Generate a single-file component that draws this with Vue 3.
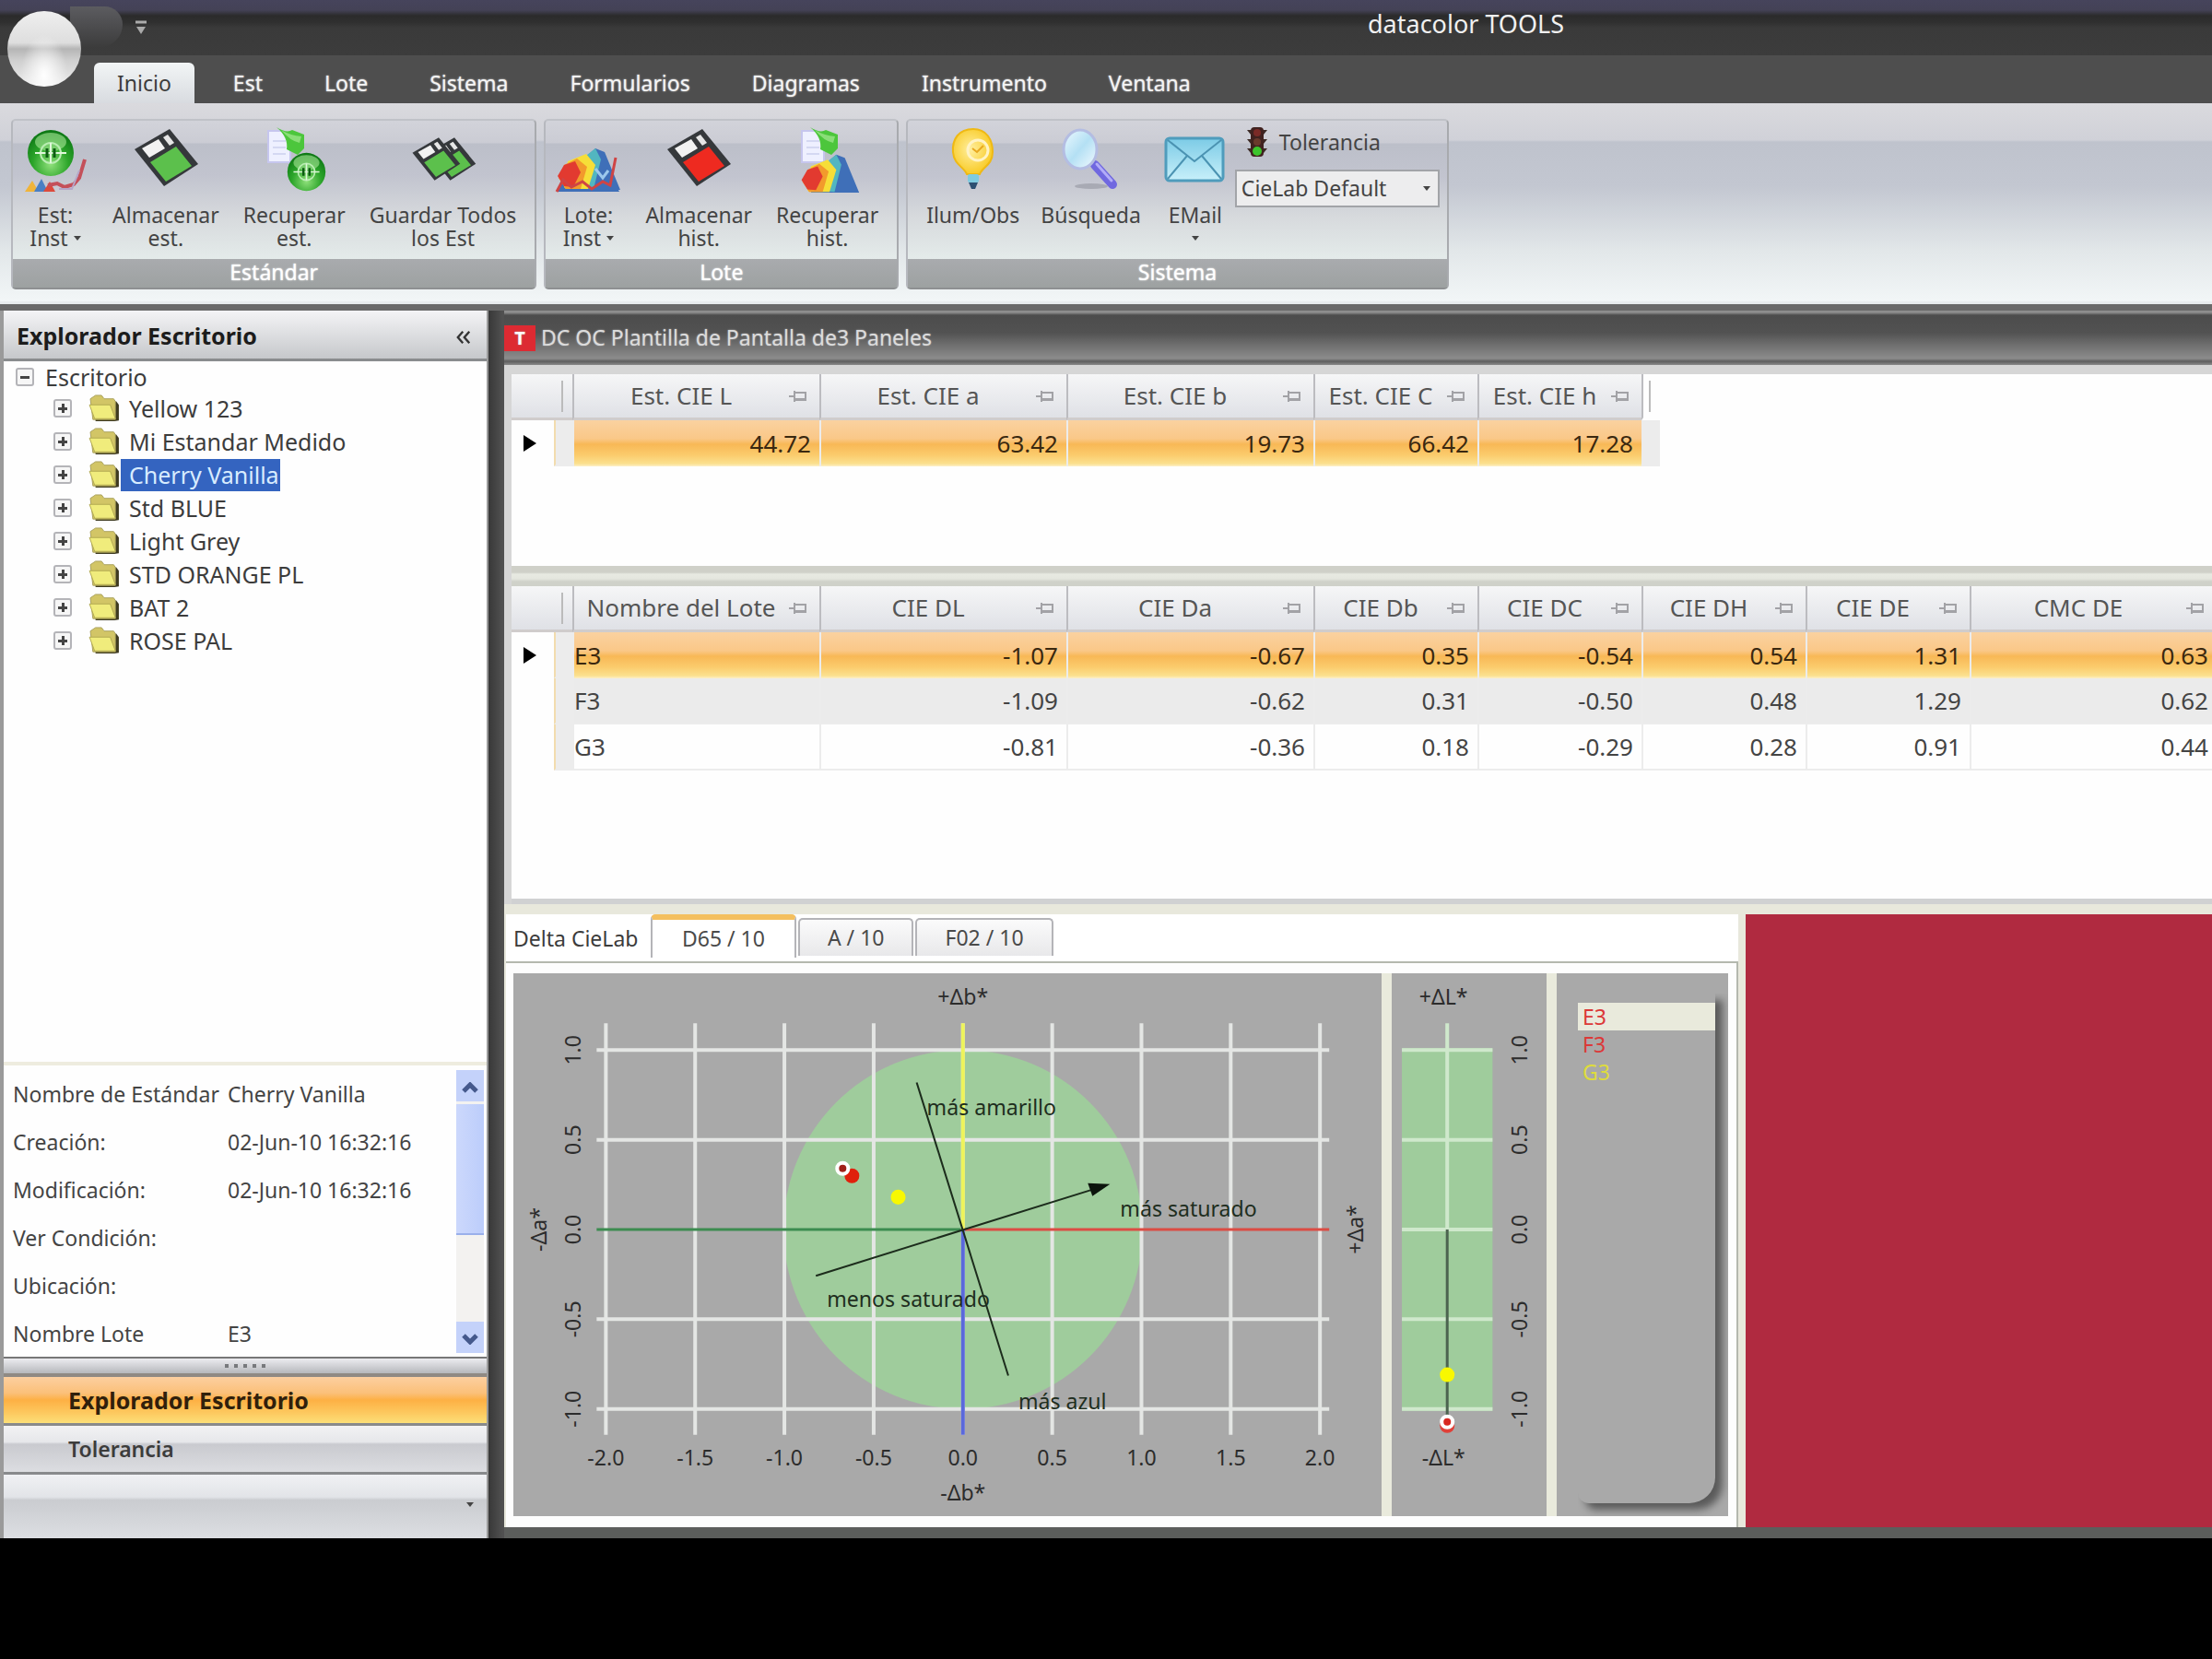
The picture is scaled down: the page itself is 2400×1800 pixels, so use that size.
<script setup>
import { ref } from 'vue'

const menu = ['Inicio', 'Est', 'Lote', 'Sistema', 'Formularios', 'Diagramas', 'Instrumento', 'Ventana']
const activeMenu = ref('Inicio')

const ribbon = [
  {
    name: 'Estándar',
    items: [
      { lines: ['Est:', 'Inst'], icon: 'measure-std', drop: true },
      { lines: ['Almacenar', 'est.'], icon: 'disk-green' },
      { lines: ['Recuperar', 'est.'], icon: 'recall-std' },
      { lines: ['Guardar Todos', 'los Est'], icon: 'disks' }
    ]
  },
  {
    name: 'Lote',
    items: [
      { lines: ['Lote:', 'Inst'], icon: 'measure-lot', drop: true },
      { lines: ['Almacenar', 'hist.'], icon: 'disk-red' },
      { lines: ['Recuperar', 'hist.'], icon: 'recall-lot' }
    ]
  },
  {
    name: 'Sistema',
    tolerance: true,
    items: [
      { lines: ['Ilum/Obs'], icon: 'bulb' },
      { lines: ['Búsqueda'], icon: 'search' },
      { lines: ['EMail', ''], icon: 'mail', drop: true }
    ]
  }
]

const folders = ['Yellow 123', 'Mi Estandar Medido', 'Cherry Vanilla', 'Std BLUE', 'Light Grey', 'STD ORANGE PL', 'BAT 2', 'ROSE PAL']
const selected = ref('Cherry Vanilla')

const details = [
  ['Nombre de Estándar', 'Cherry Vanilla'],
  ['Creación:', '02-Jun-10 16:32:16'],
  ['Modificación:', '02-Jun-10 16:32:16'],
  ['Ver Condición:', ''],
  ['Ubicación:', ''],
  ['Nombre Lote', 'E3']
]

const stdColumns = ['Est. CIE L', 'Est. CIE a', 'Est. CIE b', 'Est. CIE C', 'Est. CIE h']
const stdRow = ['44.72', '63.42', '19.73', '66.42', '17.28']

const lotColumns = ['Nombre del Lote', 'CIE DL', 'CIE Da', 'CIE Db', 'CIE DC', 'CIE DH', 'CIE DE', 'CMC DE']
const lotRows = [
  ['E3', '-1.07', '-0.67', '0.35', '-0.54', '0.54', '1.31', '0.63'],
  ['F3', '-1.09', '-0.62', '0.31', '-0.50', '0.48', '1.29', '0.62'],
  ['G3', '-0.81', '-0.36', '0.18', '-0.29', '0.28', '0.91', '0.44']
]

const illuminants = ['D65 / 10', 'A / 10', 'F02 / 10']
const illuminant = ref('D65 / 10')

const xTicks = [-2, -1.5, -1, -0.5, 0, 0.5, 1, 1.5, 2]
const yTicks = [1, 0.5, 0, -0.5, -1]
const px = v => 486 + v * 193
const py = v => 277 - v * 194
</script>

<template>
  <div class="app">
    <svg class="defs" aria-hidden="true">
      <defs>
        <radialGradient id="sphere" cx=".5" cy=".75" r=".7">
          <stop offset="0" stop-color="#8ee07a" />
          <stop offset=".55" stop-color="#2ca52a" />
          <stop offset="1" stop-color="#0f7a16" />
        </radialGradient>
        <radialGradient id="glow" cx=".45" cy=".45" r=".6">
          <stop offset="0" stop-color="#ffefa0" />
          <stop offset="1" stop-color="#f8c81c" />
        </radialGradient>
        <linearGradient id="envelope" x1="0" y1="0" x2="0" y2="1">
          <stop offset="0" stop-color="#7ccbe6" />
          <stop offset="1" stop-color="#c8f0fa" />
        </linearGradient>
        <linearGradient id="lens" x1="0" y1="0" x2="1" y2="1">
          <stop offset="0" stop-color="#eefaff" />
          <stop offset=".5" stop-color="#b4e0f4" />
          <stop offset="1" stop-color="#f4fbff" />
        </linearGradient>
        <symbol id="disk-frame" viewBox="0 0 72 72">
          <path d="M2 25 40 3 71 41 34 65Z" fill="#35383b" />
          <path d="M10 24 28 14 35 24 18 34Z" fill="#f2f2f2" />
          <path d="M33 12 38 9 45 18 40 21Z" fill="#e6e6e6" />
        </symbol>
        <symbol id="globe" viewBox="0 0 52 52">
          <circle cx="26" cy="26" r="25" fill="url(#sphere)" />
          <ellipse cx="26" cy="14" rx="17" ry="10" fill="#b6f0a4" opacity=".55" />
          <circle cx="26" cy="26" r="11" fill="none" stroke="#b9edb2" stroke-width="2" />
          <path d="M9 26H43M26 15V37" stroke="#dff7da" stroke-width="2" />
          <path d="M22 21V31M30 21V31" stroke="#0c5c12" stroke-width="3" />
        </symbol>
        <symbol id="measure-std" viewBox="0 0 72 72">
          <path d="M3 71 11 59 18 71Z" fill="#f0b43a" />
          <path d="M13 71 21 57 28 71Z" fill="#4a7fc4" />
          <path d="M23 71 30 60 36 71Z" fill="#dc4a3c" />
          <path d="M28 64 38 62 46 66 56 63 62 56 68 36" fill="none" stroke="#c4505a" stroke-width="4" />
          <path d="M40 68 54 68 62 48" fill="none" stroke="#b5a6c8" stroke-width="2" />
          <use href="#globe" x="5" y="3" width="52" height="52" />
        </symbol>
        <symbol id="disk-green" viewBox="0 0 72 72">
          <use href="#disk-frame" />
          <path d="M19 39 47 22 64 43 36 60Z" fill="#5cc04c" />
        </symbol>
        <symbol id="disk-red" viewBox="0 0 72 72">
          <use href="#disk-frame" />
          <path d="M19 39 47 22 64 43 36 60Z" fill="#ee2a20" />
        </symbol>
        <symbol id="disks" viewBox="0 0 72 72">
          <use href="#disk-green" x="18" y="10" width="54" height="54" />
          <use href="#disk-green" x="1" y="10" width="54" height="54" />
        </symbol>
        <symbol id="sheet" viewBox="0 0 72 72">
          <path d="M8 5H24L32 12V39H8Z" fill="#eef0ff" stroke="#c6c6ee" stroke-width="2" />
          <path d="M13 16H27M13 23H27M13 30H27" stroke="#d4d8f2" stroke-width="2" />
          <path d="M17 1Q28 8 34 4L47 9V24L40 31 28 25Q30 12 17 1Z" fill="#4cc63c" />
          <path d="M22 4Q32 10 44 11L42 18Q32 16 22 4Z" fill="#8ade78" />
        </symbol>
        <symbol id="recall-std" viewBox="0 0 72 72">
          <use href="#sheet" />
          <use href="#globe" x="28" y="28" width="43" height="43" />
        </symbol>
        <symbol id="peaks" viewBox="0 0 72 50">
          <path d="M14 49 28 18 44 4 54 8 71 49Z" fill="#3f6fb8" />
          <path d="M14 46 26 18 44 4 50 16 42 48Z" fill="#52b6c0" />
          <path d="M10 46 14 18 34 10 44 22 36 48H12Z" fill="#f6de38" />
          <path d="M4 36 10 22 24 15 35 24 28 48H12Z" fill="#f29a2c" />
          <path d="M3 34 10 22 22 18 28 30 20 46 10 45Z" fill="#e23a30" />
        </symbol>
        <symbol id="measure-lot" viewBox="0 0 72 72">
          <path d="M2 71 8 56H62L70 71Z" fill="#3f6fb8" />
          <use href="#peaks" x="0" y="20" width="72" height="50" />
          <path d="M2 71 9 58 18 66 30 60 40 68 52 60 60 64 66 34" fill="none" stroke="#cf4444" stroke-width="3" />
          <path d="M44 46 52 56 58 48" fill="none" stroke="#9cc8ec" stroke-width="3" />
        </symbol>
        <symbol id="recall-lot" viewBox="0 0 72 72">
          <use href="#sheet" />
          <use href="#peaks" x="4" y="27" width="68" height="46" />
        </symbol>
        <symbol id="bulb" viewBox="0 0 72 72">
          <path d="M36 3C20 3 13 14 14 28 15 42 26 44 29 52H43C46 44 57 42 57 28 57 14 50 3 36 3Z" fill="url(#glow)" stroke="#efb914" stroke-width="2" />
          <circle cx="41" cy="26" r="11" fill="none" stroke="#fff3c4" stroke-width="3" />
          <path d="M35 24 40 28 47 21" fill="none" stroke="#e8a820" stroke-width="2" />
          <rect x="30" y="52" width="12" height="9" rx="2" fill="#7fcbe0" />
          <path d="M31 61H41L38 68H34Z" fill="#2c4f72" />
        </symbol>
        <symbol id="search" viewBox="0 0 72 72">
          <ellipse cx="36" cy="65" rx="18" ry="3" fill="#a8aab4" />
          <path d="M40 42 59 63" stroke="#7068e0" stroke-width="10" stroke-linecap="round" />
          <path d="M42 41 58 59" stroke="#b2acf8" stroke-width="3" stroke-linecap="round" />
          <ellipse cx="24" cy="25" rx="18" ry="21" fill="url(#lens)" stroke="#b4bde2" stroke-width="3" />
        </symbol>
        <symbol id="mail" viewBox="0 0 72 72">
          <rect x="4" y="13" width="62" height="46" rx="4" fill="url(#envelope)" stroke="#4f9cbc" stroke-width="3" />
          <path d="M6 15 35 38 64 15M6 57 27 32M64 57 43 32" fill="none" stroke="#4b93b2" stroke-width="2" />
        </symbol>
        <symbol id="folder" viewBox="0 0 36 32">
          <path d="M8 8H32L35 12V30L30 31H8Z" fill="#3e3a20" />
          <path d="M2 5 8 1H15L18 5H29L31 8V29H5Z" fill="#d2c566" stroke="#a89f5a" />
          <path d="M1 12H25L31 28H7Z" fill="#f0ec7c" stroke="#b0a850" />
        </symbol>
        <symbol id="pin" viewBox="0 0 22 16">
          <path d="M1 8H6M7 2V14M7 4H19V11H7M8 12H20" fill="none" stroke="#a2a2a6" stroke-width="2" />
        </symbol>
      </defs>
    </svg>

    <header class="titlebar">
      <span class="quick-shape"></span>
      <button class="orb" aria-label="Menú principal"></button>
      <button class="quick" aria-label="Personalizar">
        <svg width="12" height="16" viewBox="0 0 12 16"><path d="M0 2H12" stroke="#aaa" stroke-width="3" /><path d="M1 7H11L6 15Z" fill="#aaa" /></svg>
      </button>
      <h1>datacolor TOOLS</h1>
    </header>

    <nav class="menu">
      <button v-for="m in menu" :key="m" :class="{ on: m === activeMenu }" @click="activeMenu = m">{{ m }}</button>
    </nav>

    <section class="ribbon">
      <div v-for="g in ribbon" :key="g.name" class="group">
        <div class="tools">
          <button v-for="t in g.items" :key="t.icon" class="tool">
            <svg class="tool-icon"><use :href="'#' + t.icon" /></svg>
            <span v-for="(l, i) in t.lines" :key="i" class="line">{{ l }}<i v-if="t.drop && i === 1" class="caret"></i></span>
          </button>
          <div v-if="g.tolerance" class="tolerance">
            <label for="tol">
              <svg width="24" height="34" viewBox="0 0 24 34">
                <path d="M1 4H23L19 9H5ZM1 14H23L19 19H5ZM1 24H23L19 29H5Z" fill="#3c2a26" />
                <rect x="5" y="1" width="14" height="32" rx="4" fill="#40221f" />
                <circle cx="12" cy="7" r="4" fill="#7a2a26" /><circle cx="12" cy="17" r="4" fill="#6a3a2c" /><circle cx="12" cy="27" r="5" fill="#3cc42c" />
              </svg>
              Tolerancia
            </label>
            <div class="select"><select id="tol"><option>CieLab Default</option></select><i class="caret"></i></div>
          </div>
        </div>
        <div class="caption">{{ g.name }}</div>
      </div>
    </section>

    <main class="workspace">
      <aside class="explorer">
        <header class="explorer-head">
          <h2>Explorador Escritorio</h2>
          <button aria-label="Contraer">
            <svg width="18" height="14" viewBox="0 0 20 18"><path d="M9 1 2 9 9 17M18 1 11 9 18 17" fill="none" stroke="#333" stroke-width="3" /></svg>
          </button>
        </header>
        <div class="tree">
          <div class="root"><button class="expander" aria-label="Contraer Escritorio"></button>Escritorio</div>
          <ul>
            <li v-for="f in folders" :key="f" :class="{ selected: f === selected }">
              <button class="expander plus" :aria-label="'Expandir ' + f"></button>
              <svg class="folder"><use href="#folder" /></svg>
              <button class="name" @click="selected = f">{{ f }}</button>
            </li>
          </ul>
        </div>
        <div class="details">
          <dl>
            <template v-for="[k, v] in details" :key="k"><dt>{{ k }}</dt><dd>{{ v }}</dd></template>
          </dl>
          <div class="scrollbar">
            <button aria-label="Subir"><svg width="18" height="12" viewBox="0 0 18 12"><path d="M2 10 9 3 16 10" fill="none" stroke="#45598c" stroke-width="5" /></svg></button>
            <div class="thumb"></div>
            <button aria-label="Bajar"><svg width="18" height="12" viewBox="0 0 18 12"><path d="M2 2 9 9 16 2" fill="none" stroke="#45598c" stroke-width="5" /></svg></button>
          </div>
        </div>
        <div class="splitter"><i v-for="n in 5" :key="n"></i></div>
        <button class="nav active">Explorador Escritorio</button>
        <button class="nav">Tolerancia</button>
        <div class="nav-foot"><i class="caret"></i></div>
      </aside>

      <div class="document">
        <header class="doc-title"><b>T</b><span>DC OC Plantilla de Pantalla de3 Paneles</span></header>

        <div class="pane std">
          <table>
            <colgroup><col class="c-mark" /><col class="c-grip" /><col class="c-l" /><col class="c-l" /><col class="c-l" /><col class="c-s" /><col class="c-s" /><col class="c-end" /></colgroup>
            <thead>
              <tr><th></th><th class="grip"></th><th v-for="c in stdColumns" :key="c"><div class="th"><span>{{ c }}</span><svg class="pin"><use href="#pin" /></svg></div></th><th class="end"></th></tr>
            </thead>
            <tbody>
              <tr class="sel"><td class="mark"><i class="arrow"></i></td><td class="grip"></td><td v-for="c in stdRow" :key="c">{{ c }}</td><td class="end"></td></tr>
            </tbody>
          </table>
        </div>

        <div class="pane lots">
          <table>
            <colgroup><col class="c-mark" /><col class="c-grip" /><col class="c-l" /><col class="c-l" /><col class="c-l" /><col class="c-s" /><col class="c-s" /><col class="c-s" /><col class="c-s" /><col class="c-l" /></colgroup>
            <thead>
              <tr><th></th><th class="grip"></th><th v-for="c in lotColumns" :key="c"><div class="th"><span>{{ c }}</span><svg class="pin"><use href="#pin" /></svg></div></th></tr>
            </thead>
            <tbody>
              <tr v-for="(r, i) in lotRows" :key="r[0]" :class="{ sel: i === 0, alt: i === 1 }">
                <td class="mark"><i v-if="i === 0" class="arrow"></i></td><td class="grip"></td>
                <td v-for="(c, j) in r" :key="j" :class="{ text: j === 0 }">{{ c }}</td>
              </tr>
            </tbody>
          </table>
        </div>

        <div class="bottom">
          <section class="plots">
            <div class="tabs">
              <span>Delta CieLab</span>
              <button v-for="t in illuminants" :key="t" :class="{ on: t === illuminant }" @click="illuminant = t">{{ t }}</button>
            </div>
            <div class="frame">
              <svg class="plot" viewBox="0 0 939 587">
                <circle :cx="px(0)" :cy="py(0)" r="194" fill="#9fcc9c" />
                <g stroke="#e4e6e4" stroke-width="4">
                  <line v-for="x in xTicks" :key="x" :x1="px(x)" :x2="px(x)" y1="54" y2="499" />
                  <line v-for="y in yTicks.filter(v => v)" :key="y" x1="90" x2="882" :y1="py(y)" :y2="py(y)" />
                </g>
                <g stroke-width="4">
                  <line x1="90" x2="486" y1="277" y2="277" stroke="#3c8c50" stroke-width="3" />
                  <line x1="486" x2="882" y1="277" y2="277" stroke="#dc4c44" stroke-width="3" />
                  <line x1="486" x2="486" y1="54" y2="277" stroke="#eef45a" />
                  <line x1="486" x2="486" y1="277" y2="499" stroke="#5a68dc" />
                </g>
                <g stroke="#1c2c1c" stroke-width="2">
                  <line x1="436" y1="118" x2="535" y2="435" />
                  <line x1="327" y1="327" x2="635" y2="231" />
                </g>
                <path d="M645 228 621 227 626 241Z" fill="#0c140c" />
                <circle cx="366" cy="219" r="8" fill="#e0200c" />
                <circle cx="356" cy="211" r="6" fill="#a02018" stroke="#fff" stroke-width="4" />
                <circle cx="416" cy="242" r="8" fill="#f8f800" />
                <g class="words">
                  <text x="447" y="153">más amarillo</text>
                  <text x="656" y="263">más saturado</text>
                  <text x="339" y="361">menos saturado</text>
                  <text x="546" y="471">más azul</text>
                </g>
                <g class="ticks">
                  <text v-for="x in xTicks" :key="x" :x="px(x)" y="532">{{ x.toFixed(1) }}</text>
                  <text v-for="y in yTicks" :key="y" :transform="`translate(73 ${py(y)}) rotate(-90)`">{{ y.toFixed(1) }}</text>
                  <text x="486" y="34">+Δb*</text>
                  <text x="486" y="570">-Δb*</text>
                  <text transform="translate(36 277) rotate(-90)">-Δa*</text>
                  <text transform="translate(919 277) rotate(-90)">+Δa*</text>
                </g>
              </svg>
              <svg class="plot" viewBox="0 0 167 587">
                <rect x="11" y="81" width="98" height="392" fill="#9fcc9c" />
                <g stroke="#cfe8cc" stroke-width="4">
                  <line v-for="y in yTicks" :key="y" x1="11" x2="109" :y1="py(y)" :y2="py(y)" />
                  <line x1="60" x2="60" y1="54" y2="277" />
                </g>
                <line x1="60" x2="60" y1="277" y2="485" stroke="#4c6450" stroke-width="3" />
                <circle cx="60" cy="434" r="8" fill="#f8f800" />
                <circle cx="60" cy="489" r="8" fill="#e04038" />
                <circle cx="60" cy="485" r="6" fill="#d82820" stroke="#fff" stroke-width="4" />
                <g class="ticks">
                  <text v-for="y in yTicks" :key="y" :transform="`translate(146 ${py(y)}) rotate(-90)`">{{ y.toFixed(1) }}</text>
                  <text x="56" y="34">+ΔL*</text>
                  <text x="56" y="532">-ΔL*</text>
                </g>
              </svg>
              <div class="legend">
                <ul class="card">
                  <li class="on">E3</li>
                  <li>F3</li>
                  <li class="yellow">G3</li>
                </ul>
              </div>
            </div>
          </section>
          <div class="swatch"></div>
        </div>
      </div>
    </main>
  </div>
</template>

<style>
body {
  margin: 0;
  background: #000;
}
</style>

<style scoped>
* {
  box-sizing: border-box;
}

.app {
  font-family: "Noto Sans", "Liberation Sans", sans-serif;
  font-size: 23px;
  line-height: 25px;
  color: #444;
  min-height: 100vh;
  background: #000;
  overflow: hidden;
}

.defs {
  position: absolute;
  width: 0;
  height: 0;
}

button,
select {
  font: inherit;
  color: inherit;
  background: none;
  border: 0;
  padding: 0;
  margin: 0;
}

h1,
h2,
ul,
dl,
dd {
  margin: 0;
  padding: 0;
  font-weight: normal;
  list-style: none;
}

.caret {
  display: inline-block;
  border: 4px solid transparent;
  border-top: 5px solid #444;
  border-bottom: 0;
}

/* Title bar */
.titlebar {
  position: relative;
  height: 60px;
  padding-left: 147px;
  display: flex;
  background: linear-gradient(#46445c 0, #444256 11px, #2b2b2b 17px, #2f2f2f 24px, #3a3a3a 30px, #3c3c3c 60px);
}

.orb {
  position: absolute;
  left: 8px;
  top: 12px;
  width: 80px;
  height: 82px;
  border-radius: 50%;
  background:
    radial-gradient(ellipse at 50% 85%, #fff 0, rgba(255, 255, 255, 0) 45%),
    linear-gradient(#efefef 0, #dedede 42%, #b5b5b5 50%, #cfcfcf 65%, #eee 100%);
  z-index: 2;
}

.quick-shape {
  position: absolute;
  left: 76px;
  top: 7px;
  width: 57px;
  height: 44px;
  border-radius: 0 24px 30px 0;
  background: linear-gradient(#5c5c60, #3c3c3c);
}

.quick {
  align-self: flex-start;
  margin-top: 17px;
}

h1 {
  flex: 1;
  padding-left: 622px;
  text-align: center;
  font-size: 27px;
  line-height: 52px;
  color: #f0f0f0;
}

/* Menu tabs */
.menu {
  display: flex;
  gap: 17px;
  padding: 8px 0 0 102px;
  height: 52px;
  background: #4e4e4e;
}

.menu button {
  padding: 0 25px;
  line-height: 44px;
  color: #f4f4f4;
  text-shadow: 0 0 2px #ddd;
}

.menu button.on {
  color: #3c3c3c;
  text-shadow: none;
  background: linear-gradient(#f2f5f6, #d8dbe0);
  border-radius: 6px 6px 0 0;
}

/* Ribbon */
.ribbon {
  display: flex;
  gap: 8px;
  padding: 17px 12px 13px;
  background: linear-gradient(#dadade 0, #d0d1d8 40px, #bfc3cd 42px, #c3c7d1 90px, #e2e7e9 160px, #f2f6f7 100%);
  border-bottom: 3px solid #e8ecee;
}

.group {
  border: 2px solid #b2b4ba;
  border-color: #c0c2c8 #a8aaae #8e9092 #b6b8be;
  border-radius: 5px;
  background: linear-gradient(#d2d3da 0, #cbccd4 24px, #bcbfc9 25px, #c2c4cf 60px, #d7dadd 105px, #e4ebea 150px);
}

.tools {
  display: flex;
  gap: 26px;
  height: 150px;
  padding: 6px 20px 0 10px;
}

.tool {
  display: flex;
  flex-direction: column;
  align-items: center;
  justify-content: flex-start;
}

.tool-icon {
  width: 72px;
  height: 72px;
  margin-bottom: 12px;
}

.line {
  display: flex;
  align-items: center;
  gap: 6px;
  min-height: 25px;
}

.caption {
  height: 31px;
  line-height: 28px;
  text-align: center;
  color: #fff;
  text-shadow: 0 0 2px #fff;
  background: linear-gradient(#a9abae, #9da1a1);
}

.group:last-child .tools {
  gap: 23px;
  padding: 6px 8px 0 20px;
}

.tolerance {
  margin-left: -16px;
  width: 222px;
}

.tolerance label {
  display: flex;
  align-items: center;
  gap: 12px;
  height: 34px;
  padding-left: 12px;
}

.select {
  display: flex;
  align-items: center;
  height: 41px;
  margin-top: 13px;
  padding-right: 8px;
  background: #ededee;
  border: 2px solid #a2a4a8;
}

.select select {
  appearance: none;
  flex: 1;
  padding-left: 5px;
}

/* Workspace */
.workspace {
  display: flex;
  border-top: 7px solid #6a6a6a;
  background: linear-gradient(90deg, #383838 530px, #505050 545px);
}

.explorer {
  display: flex;
  flex-direction: column;
  width: 530px;
  margin-right: 17px;
  border: solid #9a9a9a;
  border-width: 0 2px 0 4px;
  background: #fefefe;
}

.explorer-head {
  display: flex;
  justify-content: space-between;
  align-items: center;
  height: 55px;
  padding: 2px 16px 0 14px;
  background: linear-gradient(#f4f4f6, #c6c8cb);
  border-bottom: 3px solid #8a8c8e;
}

h2 {
  font-weight: bold;
  font-size: 25px;
  color: #1c1c1c;
}

.tree {
  flex: 1;
  padding: 1px 0 0 13px;
  font-size: 25px;
  color: #3c3c3c;
}

.root {
  display: flex;
  align-items: center;
  gap: 12px;
  height: 32px;
}

.tree li {
  display: flex;
  align-items: center;
  height: 36px;
  padding-left: 41px;
}

.expander {
  width: 20px;
  height: 20px;
  border: 2px solid #b4b4b8;
  border-radius: 3px;
  background: linear-gradient(#444, #444) center / 10px 3px no-repeat #f6f6f6;
}

.expander.plus {
  background: linear-gradient(#444, #444) center / 10px 3px no-repeat, linear-gradient(#444, #444) center / 3px 10px no-repeat, #f6f6f6;
}

.folder {
  width: 36px;
  height: 30px;
  margin-left: 17px;
}

.name {
  height: 35px;
  line-height: 33px;
  padding: 0 1px 0 9px;
}

.selected .name {
  background: #3464c0;
  color: #d8ecff;
}

.details {
  display: flex;
  justify-content: space-between;
  height: 322px;
  padding: 5px 3px 4px 0;
  border-top: 4px solid #eeecdf;
  border-bottom: 2px solid #777;
}

.details dl {
  display: grid;
  grid-template-columns: 233px auto;
  grid-auto-rows: 52px;
  padding-left: 10px;
  line-height: 52px;
}

.scrollbar {
  display: flex;
  flex-direction: column;
  width: 30px;
  background: #f3f2f0;
}

.scrollbar button {
  height: 34px;
  line-height: 12px;
  background: #c4d2fa;
}

.scrollbar button:last-child {
  margin-top: auto;
}

.thumb {
  height: 142px;
  margin-top: 3px;
  background: linear-gradient(90deg, #ccd8fc, #bccdfb);
  border-bottom: 2px solid #9ab0ea;
}

.splitter {
  display: flex;
  justify-content: center;
  gap: 6px;
  height: 20px;
  padding-top: 6px;
  background: linear-gradient(#ececf0, #b6b8bc);
  border-bottom: 4px solid #8f8a84;
}

.splitter i {
  width: 4px;
  height: 4px;
  background: #77797c;
}

.nav {
  height: 53px;
  padding-left: 70px;
  text-align: left;
  font-weight: 600;
  color: #3c3c3c;
  background: linear-gradient(#f2f2f4 0, #e6e7ea 35%, #c9cacf 40%, #dcdde1 100%);
  border-bottom: 3px solid #888a8c;
}

.nav.active {
  font-weight: bold;
  font-size: 25px;
  color: #30200c;
  background: linear-gradient(#fccfa0 0, #fbc079 35%, #fdb044 50%, #fdc65c 75%, #fcdf78 100%);
}

.nav-foot {
  display: flex;
  justify-content: flex-end;
  align-items: center;
  height: 69px;
  padding: 0 14px 4px;
  background: linear-gradient(#f0f1f4 0, #e2e4e8 35%, #caccd0 40%, #dcdee2 100%);
}

/* Document window */
.document {
  flex: 1;
  min-width: 0;
  display: flex;
  flex-direction: column;
  border-bottom: 12px solid #5c5e5c;
  background: #d6d6d6;
}

.doc-title {
  display: flex;
  align-items: center;
  gap: 6px;
  height: 59px;
  color: #dcdcdc;
  text-shadow: 0 0 2px #aaa;
  background: linear-gradient(#8e8e8e 0, #8e8e8e 2px, #4c4c4c 5px, #525252 24px, #6c6c6c 36px, #8c8c8c 52px, #5e5e5e 55px, #8a8a8a 100%);
}

.doc-title b {
  width: 34px;
  height: 28px;
  font-size: 20px;
  line-height: 28px;
  text-align: center;
  color: #fff;
  background: #dd2a32;
}

.pane {
  margin-left: 8px;
  background: #fefefe;
  overflow: hidden;
}

.std {
  margin-top: 10px;
  height: 208px;
}

.lots {
  height: 367px;
  border-top: 22px solid #d2d4cc;
  border-image: linear-gradient(#cfd0c8 0, #cfd0c8 7px, #e8eae2 9px, #e4e6de 14px, #cfd1c9 17px) 22 0 0 0;
  box-shadow: inset 0 -6px #d0d1d2;
}

table {
  table-layout: fixed;
  width: 0;
  border-collapse: separate;
  border-spacing: 0;
  font-size: 26px;
}

.c-mark { width: 46px; }
.c-grip { width: 20px; }
.c-l { width: 268px; }
.c-s { width: 178px; }
.c-end { width: 20px; }

th {
  height: 50px;
  padding: 0;
  font-weight: normal;
  color: #555;
  background: linear-gradient(#f6f6f7, #dfe1e6);
  border-left: 2px solid #bcbcc0;
  border-bottom: 3px solid #d0cccc;
}

th:first-child {
  border-left: 0;
}

th.grip {
  border-left: 0;
  background: linear-gradient(#bbb, #bbb) 8px 50% / 2px 34px no-repeat, linear-gradient(#f6f6f7, #dfe1e6);
}

th.end {
  background: linear-gradient(#bbb, #bbb) 6px 50% / 2px 34px no-repeat, #fefefe;
  border-bottom-color: #fefefe;
}

.th {
  display: flex;
  align-items: center;
  padding-right: 12px;
  white-space: nowrap;
}

.th span {
  flex: 1;
  text-align: center;
}

.pin {
  flex: none;
  width: 22px;
  height: 16px;
}

td {
  height: 50px;
  padding: 0 9px 0 0;
  text-align: right;
  color: #444;
  border-left: 2px solid #ececec;
  border-bottom: 2px solid #ececec;
}

td.text {
  padding: 0;
  text-align: left;
}

tr td.mark {
  padding-left: 13px;
  border: 0;
  background: #fefefe;
}

tr td.grip {
  border-left: 2px solid #f2dcae;
  border-bottom: 2px solid #ececec;
  background: #ececec;
}

.alt td {
  background: #ebebeb;
}

.sel td {
  color: #3a2810;
  background: linear-gradient(#fad2a0 0, #fac888 40%, #f8b856 52%, #fbcb6c 75%, #fbe08e 94%, #fdf0c8 100%);
  border-bottom: 0;
}

.sel td.end {
  background: #ececec;
}

.arrow {
  display: block;
  width: 0;
  border: 9px solid transparent;
  border-left: 14px solid #000;
  border-right: 0;
}

/* Plots */
.bottom {
  display: grid;
  grid-template-columns: 1338fr 506fr;
  gap: 8px;
  padding-top: 11px;
  background: #e8e8dc;
}

.plots {
  margin-left: 2px;
  background: #fff;
}

.tabs {
  display: flex;
  align-items: flex-start;
  gap: 2px;
  height: 51px;
}

.tabs span {
  width: 155px;
  padding-left: 8px;
  line-height: 52px;
  color: #3c3c3c;
}

.tabs button {
  height: 41px;
  margin-top: 4px;
  padding: 0 30px;
  color: #4a4a4a;
  background: linear-gradient(#fbfbfb, #e8e8ea);
  border: 2px solid #b4b4b8;
  border-bottom: 0;
  border-radius: 5px 5px 0 0;
}

.tabs button.on {
  height: 47px;
  margin-top: 0;
  padding: 0 32px;
  border-top: 6px solid #f4bf5e;
  background: #fff;
}

.frame {
  display: grid;
  grid-template-columns: 939fr 167fr 185fr;
  gap: 11px;
  padding: 11px 9px 12px 8px;
  border: 2px solid #b4b8ae;
  border-left: 0;
  border-bottom: 0;
  background: linear-gradient(#e9eadc, #e9eadc) content-box, #fdfdfd;
}

.plot {
  display: block;
  width: 100%;
  background: #a9a9a9;
}

.words text {
  fill: #1e2e1e;
}

.ticks text {
  fill: #2c2c2c;
  text-anchor: middle;
}

.legend {
  padding: 22px 14px 14px 23px;
  background: #a9a9a9;
  overflow: hidden;
}

.card {
  height: 100%;
  padding-top: 10px;
  border-radius: 0 0 28px 12px;
  background: #a9a9a9;
  box-shadow: 8px 7px 8px #5a5a5a;
  color: #dc3838;
  clip-path: inset(0 -20px -20px 0);
}

.card li {
  height: 30px;
  padding-left: 5px;
  line-height: 30px;
}

.card .on {
  background: #e9eadc;
}

.card .yellow {
  color: #dedc3c;
}

.swatch {
  background: #b02a40;
}
</style>
